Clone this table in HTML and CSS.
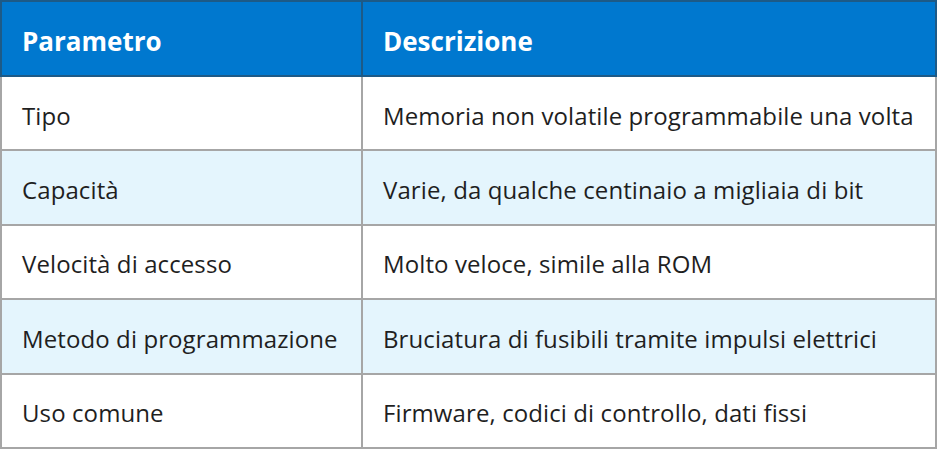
FILE: index.html
```html
<!DOCTYPE html>
<html lang="it">
<head>
<meta charset="utf-8">
<link rel="stylesheet" href="styles.css">
</head>
<body>
<table class="spec">
  <thead>
    <tr><th class="c1">Parametro</th><th>Descrizione</th></tr>
  </thead>
  <tbody>
    <tr><td>Tipo</td><td>Memoria non volatile programmabile una volta</td></tr>
    <tr class="alt"><td>Capacità</td><td>Varie, da qualche centinaio a migliaia di bit</td></tr>
    <tr><td>Velocità di accesso</td><td>Molto veloce, simile alla ROM</td></tr>
    <tr class="alt"><td>Metodo di programmazione</td><td>Bruciatura di fusibili tramite impulsi elettrici</td></tr>
    <tr><td>Uso comune</td><td>Firmware, codici di controllo, dati fissi</td></tr>
  </tbody>
</table>
</body>
</html>
```
FILE: styles.css
```css
html, body { margin: 0; padding: 0; background: #fff; }
body { font-family: "Open Sans", "Noto Sans", sans-serif; color: #1f1f1f; }
.spec {
  border-collapse: collapse;
  width: 937px;
  table-layout: fixed;
}
.spec th, .spec td {
  text-align: left;
  padding: 4px 0 0 20px;
  font-size: 24px;
  letter-spacing: 0.1px;
  border: 2px solid #a6a6a6;
  white-space: nowrap;
}
.spec th {
  background: #0078cf;
  color: #fff;
  font-weight: 700;
  font-size: 26px;
  letter-spacing: 0;
  height: 69px;
  border-color: #1d5a87;
}
.spec .c1 { width: 339px; }
.spec td { height: 68.4px; }
.spec tr.alt td { background: #e4f5fd; }
```
